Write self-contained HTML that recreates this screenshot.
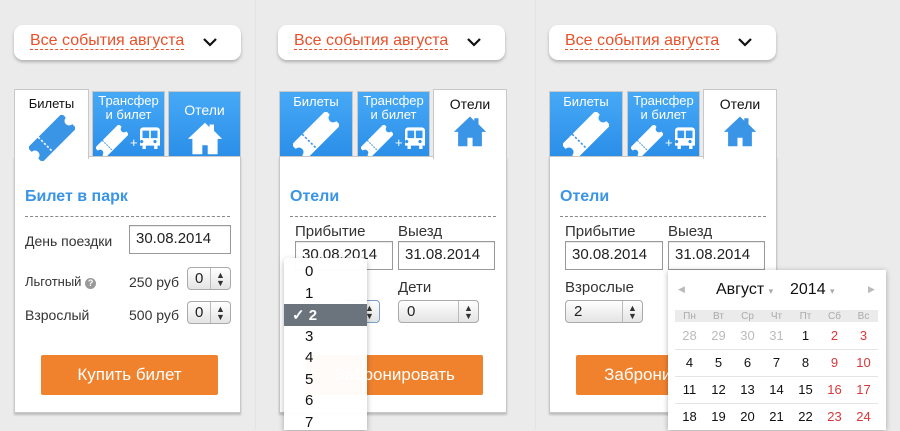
<!DOCTYPE html>
<html><head><meta charset="utf-8">
<style>
*{box-sizing:border-box;margin:0;padding:0}
body{width:900px;height:430px;overflow:hidden;background:#ebebeb;font-family:"Liberation Sans",Arial,sans-serif;position:relative;color:#333}
.a{position:absolute}
.dd{position:absolute;top:25px;width:227px;height:35px;background:#fff;border-radius:9px;box-shadow:0 2px 3px rgba(0,0,0,.25)}
.dd span{position:absolute;left:16px;top:7px;font-size:16px;color:#e8502a;border-bottom:1px dashed #e8502a;line-height:17px}
.dd svg{position:absolute;left:188px;top:12px}
.tab{position:absolute;top:91px;height:66px;background:linear-gradient(#46a9f6,#2b8ee8);color:#fff;font-size:13px;text-align:center;line-height:14px;border:1px solid #c8c8c8;border-bottom:none}
.tab.on{background:#fff;color:#111;top:89px;height:70px;z-index:2}
.panel{position:absolute;top:156px;height:257px;background:#fff;border:1px solid #c8c8c8;box-shadow:0 2px 2px rgba(0,0,0,.2)}
.title{position:absolute;left:10px;top:31px;color:#3a95e6;font-weight:bold;font-size:16px}
.dash{position:absolute;left:10px;right:10px;top:59px;border-top:1px dashed #888}
.lbl{position:absolute;font-size:14px;color:#333}
.inp{position:absolute;border:1px solid #999;background:#fff;font-size:15px;padding:4px 0 0 6px;color:#222;box-shadow:inset 0 1px 1px rgba(0,0,0,.1)}
.sel{position:absolute;border:1px solid #aaa;border-radius:4px;background:linear-gradient(#fff,#e4e4e4);font-size:15px;padding:2px 0 0 8px;color:#222}
.sel i{position:absolute;right:0;top:0;bottom:0;width:20px;border-left:1px solid #bbb;font-style:normal;font-size:9px;line-height:8px;text-align:center;padding-top:3px;color:#333}
.btn{position:absolute;height:40px;background:#f0822e;color:#fff;font-size:17px;text-align:center;line-height:40px;border-radius:2px}
.cal td{width:29px;text-align:center;font-size:13px;height:27px;border-top:1px solid #e4e4e4;color:#111}
.cal .g{color:#bbb}.cal .r{color:#d9383a}
</style></head><body>

<svg width="0" height="0" style="position:absolute">
<defs>
<symbol id="tk" viewBox="0 0 40 40"><g transform="rotate(-45 20 20)"><path d="M-1 11h42v5a4 4 0 0 0 0 8v5H-1v-5a4 4 0 0 0 0-8z" fill="currentColor"/><line x1="12" y1="11" x2="12" y2="29" stroke="var(--bg)" stroke-width="1.4" stroke-dasharray="2 1.6"/></g></symbol>
<symbol id="hs" viewBox="0 0 40 40"><path d="M20 3L1 21h5v17h11v-10h6v10h11V21h5L30 12V5h-5v3z" fill="currentColor"/></symbol>
<symbol id="bus" viewBox="0 0 24 28"><path d="M4 0h16a4 4 0 0 1 4 4v18h-3v4h-4v-4H7v4H3v-4H0V4a4 4 0 0 1 4-4zM3 4v9h8V4zm10 0v9h8V4zM4 17a2 2 0 1 0 0 .1zm16 0a2 2 0 1 0 0 .1z" fill="#fff" fill-rule="evenodd"/></symbol>
</defs></svg>

<div class="a" style="left:255px;top:0;width:1px;height:430px;background:#e3e3e3"></div>
<div class="a" style="left:535px;top:0;width:1px;height:430px;background:#e3e3e3"></div>

<!-- PANEL 1 -->
<div class="dd" style="left:14px"><span>Все события августа</span><svg width="16" height="10"><path d="M2 2l6 6 6-6" stroke="#111" stroke-width="2.2" fill="none"/></svg></div>
<div class="tab on" style="left:14px;width:75px;padding-top:7px">Билеты<svg style="display:block;margin:4px auto 0;color:#3a95e6;--bg:#fff" width="46" height="46"><use href="#tk"/></svg></div>
<div class="tab" style="left:92px;width:73px;padding-top:2px">Трансфер<br>и билет<div style="position:relative;height:32px"><svg class="a" style="left:3px;top:3px;color:#fff;--bg:#3a95e6" width="32" height="32"><use href="#tk"/></svg><span class="a" style="left:37px;top:14px;font-size:13px">+</span><svg class="a" style="left:47px;top:5px" width="20" height="24"><use href="#bus"/></svg></div></div>
<div class="tab" style="left:168px;width:73px;padding-top:11px;font-size:14px">Отели<svg style="display:block;margin:3px auto 0;color:#fff" width="36" height="36"><use href="#hs"/></svg></div>
<div class="panel" style="left:14px;width:227px">
 <div class="title">Билет в парк</div><div class="dash"></div>
 <div class="lbl" style="left:10px;top:76px">День поездки</div>
 <div class="inp" style="left:114px;top:68px;width:102px;height:29px">30.08.2014</div>
 <div class="lbl" style="left:10px;top:117px;font-size:13px">Льготный <span style="display:inline-block;width:11px;height:11px;border-radius:50%;background:#999;color:#fff;font-size:9px;text-align:center;line-height:11px;font-weight:bold">?</span></div>
 <div class="lbl" style="left:114px;top:117px">250 руб</div>
 <div class="sel" style="left:172px;top:110px;width:44px;height:23px;padding-left:7px">0<i>▲<br>▼</i></div>
 <div class="lbl" style="left:10px;top:150px">Взрослый</div>
 <div class="lbl" style="left:114px;top:150px">500 руб</div>
 <div class="sel" style="left:172px;top:144px;width:44px;height:23px;padding-left:7px">0<i>▲<br>▼</i></div>
 <div class="btn" style="left:26px;top:198px;width:177px">Купить билет</div>
</div>

<!-- PANEL 2 -->
<div class="dd" style="left:278px"><span>Все события августа</span><svg width="16" height="10"><path d="M2 2l6 6 6-6" stroke="#111" stroke-width="2.2" fill="none"/></svg></div>
<div class="tab" style="left:279px;width:74px;padding-top:3px">Билеты<svg style="display:block;margin:3px auto 0;color:#fff;--bg:#3a95e6" width="46" height="46"><use href="#tk"/></svg></div>
<div class="tab" style="left:357px;width:73px;padding-top:2px">Трансфер<br>и билет<div style="position:relative;height:32px"><svg class="a" style="left:3px;top:3px;color:#fff;--bg:#3a95e6" width="32" height="32"><use href="#tk"/></svg><span class="a" style="left:37px;top:14px;font-size:13px">+</span><svg class="a" style="left:47px;top:5px" width="20" height="24"><use href="#bus"/></svg></div></div>
<div class="tab on" style="left:433px;width:74px;padding-top:7px;font-size:14px">Отели<svg style="display:block;margin:3px auto 0;color:#3a95e6" width="34" height="34"><use href="#hs"/></svg></div>
<div class="panel" style="left:279px;width:228px">
 <div class="title">Отели</div><div class="dash"></div>
 <div class="lbl" style="left:15px;top:66px;font-size:15px">Прибытие</div>
 <div class="lbl" style="left:118px;top:66px;font-size:15px">Выезд</div>
 <div class="inp" style="left:15px;top:84px;width:98px;height:29px">30.08.2014</div>
 <div class="inp" style="left:118px;top:84px;width:97px;height:29px">31.08.2014</div>
 <div class="lbl" style="left:118px;top:122px;font-size:15px">Дети</div>
 <div class="sel" style="left:118px;top:143px;width:81px;height:23px">0<i>▲<br>▼</i></div>
 <div class="sel" style="left:60px;top:143px;width:40px;height:23px;border-color:#7aa0c8">&nbsp;<i>▲<br>▼</i></div>
 <div class="btn" style="left:26px;top:198px;width:177px">Забронировать</div>
</div>
<div class="a" style="left:284px;top:258px;width:83px;height:172px;background:rgba(255,255,255,.97);box-shadow:0 2px 6px rgba(0,0,0,.3);border-radius:4px 4px 0 0;font-size:15px;color:#111">
 <div style="position:absolute;left:0;right:0;top:46px;height:22px;background:#6b737d"></div>
 <div class="a" style="left:21px;top:5px">0</div>
 <div class="a" style="left:21px;top:27px">1</div>
 <div class="a" style="left:8px;top:48px;color:#fff;font-weight:bold">✓ 2</div>
 <div class="a" style="left:21px;top:70px">3</div>
 <div class="a" style="left:21px;top:91px">4</div>
 <div class="a" style="left:21px;top:113px">5</div>
 <div class="a" style="left:21px;top:134px">6</div>
 <div class="a" style="left:21px;top:156px">7</div>
</div>

<!-- PANEL 3 -->
<div class="dd" style="left:549px"><span>Все события августа</span><svg width="16" height="10"><path d="M2 2l6 6 6-6" stroke="#111" stroke-width="2.2" fill="none"/></svg></div>
<div class="tab" style="left:549px;width:74px;padding-top:3px">Билеты<svg style="display:block;margin:3px auto 0;color:#fff;--bg:#3a95e6" width="46" height="46"><use href="#tk"/></svg></div>
<div class="tab" style="left:627px;width:73px;padding-top:2px">Трансфер<br>и билет<div style="position:relative;height:32px"><svg class="a" style="left:3px;top:3px;color:#fff;--bg:#3a95e6" width="32" height="32"><use href="#tk"/></svg><span class="a" style="left:37px;top:14px;font-size:13px">+</span><svg class="a" style="left:47px;top:5px" width="20" height="24"><use href="#bus"/></svg></div></div>
<div class="tab on" style="left:703px;width:74px;padding-top:7px;font-size:14px">Отели<svg style="display:block;margin:3px auto 0;color:#3a95e6" width="34" height="34"><use href="#hs"/></svg></div>
<div class="panel" style="left:549px;width:228px">
 <div class="title">Отели</div><div class="dash"></div>
 <div class="lbl" style="left:15px;top:66px;font-size:15px">Прибытие</div>
 <div class="lbl" style="left:118px;top:66px;font-size:15px">Выезд</div>
 <div class="inp" style="left:15px;top:84px;width:98px;height:29px">30.08.2014</div>
 <div class="inp" style="left:118px;top:84px;width:97px;height:29px">31.08.2014</div>
 <div class="lbl" style="left:15px;top:122px;font-size:15px">Взрослые</div>
 <div class="sel" style="left:15px;top:143px;width:78px;height:23px">2<i>▲<br>▼</i></div>
 <div class="btn" style="left:26px;top:198px;width:177px">Забронировать</div>
</div>
<div class="a" style="left:668px;top:270px;width:218px;height:160px;background:#fff;box-shadow:0 1px 5px rgba(0,0,0,.3)">
 <div class="a" style="left:10px;top:14px;font-size:9px;color:#bbb">◀</div>
 <div class="a" style="left:48px;top:11px;font-size:16px;color:#111">Август <span style="font-size:9px;color:#aaa">▾</span></div>
 <div class="a" style="left:122px;top:11px;font-size:16px;color:#111">2014 <span style="font-size:9px;color:#aaa">▾</span></div>
 <div class="a" style="left:200px;top:14px;font-size:9px;color:#bbb">▶</div>
 <table class="cal a" style="left:7px;top:40px;border-collapse:collapse">
  <tr style="background:#ebebeb"><td style="height:12px;font-size:10px;color:#aaa;border:none">Пн</td><td style="height:12px;font-size:10px;color:#aaa;border:none">Вт</td><td style="height:12px;font-size:10px;color:#aaa;border:none">Ср</td><td style="height:12px;font-size:10px;color:#aaa;border:none">Чт</td><td style="height:12px;font-size:10px;color:#aaa;border:none">Пт</td><td style="height:12px;font-size:10px;color:#aaa;border:none">Сб</td><td style="height:12px;font-size:10px;color:#aaa;border:none">Вс</td></tr>
  <tr><td class="g" style="border:none">28</td><td class="g" style="border:none">29</td><td class="g" style="border:none">30</td><td class="g" style="border:none">31</td><td style="border:none">1</td><td class="r" style="border:none">2</td><td class="r" style="border:none">3</td></tr>
  <tr><td>4</td><td>5</td><td>6</td><td>7</td><td>8</td><td class="r">9</td><td class="r">10</td></tr>
  <tr><td>11</td><td>12</td><td>13</td><td>14</td><td>15</td><td class="r">16</td><td class="r">17</td></tr>
  <tr><td>18</td><td>19</td><td>20</td><td>21</td><td>22</td><td class="r">23</td><td class="r">24</td></tr>
 </table>
</div>
</body></html>
